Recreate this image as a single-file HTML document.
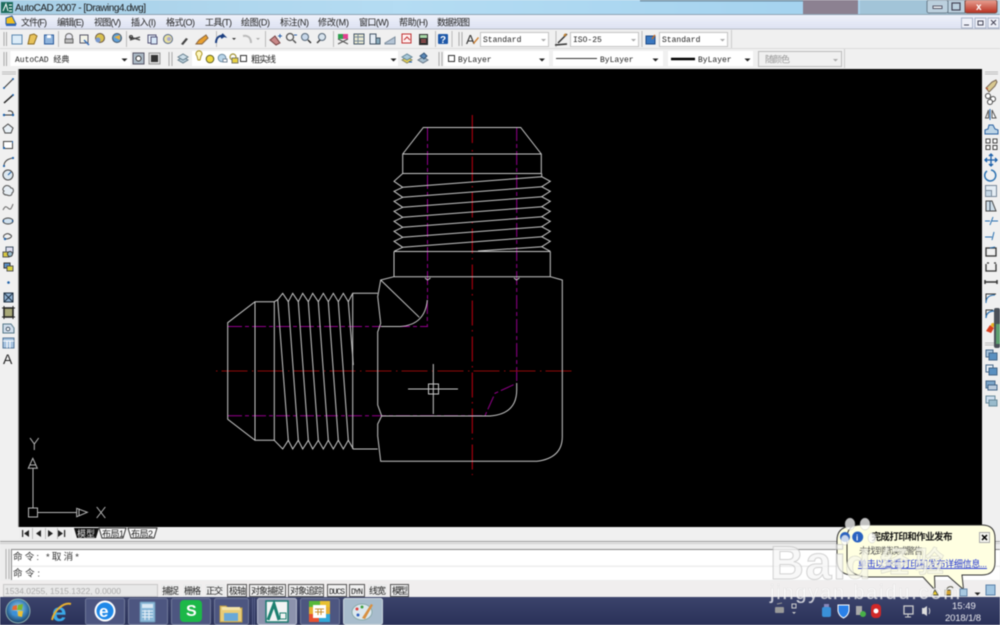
<!DOCTYPE html>
<html><head><meta charset="utf-8"><title>AutoCAD 2007</title>
<style>
html,body{margin:0;padding:0;width:1000px;height:625px;overflow:hidden;background:#f0f0f0}
svg{position:absolute;left:0;top:0;filter:blur(.4px)}
text{font-family:"Liberation Sans","Noto Sans CJK SC",sans-serif;fill:#222}
.m{font-family:"Liberation Mono","Noto Sans CJK SC",monospace;font-size:8px}
.cb{fill:#fff;stroke:#c4c4c4}
.g{fill:none;stroke:#333;stroke-width:1}
.b{fill:none;stroke:#1b5fa8;stroke-width:1.4}
.d{fill:#3c3c3c}
.st{font-size:9px;fill:#222}
.sb{fill:#f0f0f0;stroke:#555;stroke-width:1}
.fl{fill:#ececec}
.tb{fill:#4d5680;stroke:#6f7898}
</style></head><body>
<svg width="1000" height="625" viewBox="0 0 1000 625" xmlns="http://www.w3.org/2000/svg">
<defs>
<linearGradient id="tt" x1="0" x2="1" y1="0" y2="0"><stop offset="0" stop-color="#a8cfe6"/><stop offset=".4" stop-color="#b4dcf3"/><stop offset=".8" stop-color="#a5d3ef"/><stop offset="1" stop-color="#b7d5e6"/></linearGradient>
<linearGradient id="mn" x1="0" x2="0" y1="0" y2="1"><stop offset="0" stop-color="#eef1fa"/><stop offset="1" stop-color="#dde2f2"/></linearGradient>
<linearGradient id="tk" x1="0" x2="0" y1="0" y2="1"><stop offset="0" stop-color="#3b436b"/><stop offset="1" stop-color="#2a3158"/></linearGradient>
<linearGradient id="cl" x1="0" x2="0" y1="0" y2="1"><stop offset="0" stop-color="#e9a294"/><stop offset="1" stop-color="#b83020"/></linearGradient>
<radialGradient id="orb" cx=".5" cy=".4" r=".6"><stop offset="0" stop-color="#a8d8ef"/><stop offset=".6" stop-color="#3a80b8"/><stop offset="1" stop-color="#1c3d60"/></radialGradient>
</defs>

<!-- title bar -->
<rect width="1000" height="15" fill="url(#tt)"/>
<rect x="640" y="0" width="200" height="1.5" fill="#6f8ea3"/>
<rect x="803" y="0" width="55" height="14" fill="#8c8191"/>
<rect x="860" y="0" width="70" height="14" fill="#a2c4d8"/>
<rect y="14" width="1000" height="1" fill="#8fa5b5"/>
<rect x="1" y="2" width="12" height="11" fill="#1d6b5c"/><path d="M3 11 L6 4 L8 11 M9 5h3M9 8h3M9 11h3" fill="none" stroke="#fff" stroke-width="1"/>
<text x="15" y="11" font-size="10" textLength="131" style="fill:#1a1a1a">AutoCAD 2007 - [Drawing4.dwg]</text>
<rect x="927" y="0" width="21" height="13" rx="2" fill="#bcd0de" stroke="#6a7d8c"/>
<rect x="933" y="6" width="9" height="2.5" fill="#f4f8fb" stroke="#556"/>
<rect x="948" y="0" width="17" height="13" fill="#bcd0de" stroke="#6a7d8c"/>
<rect x="952" y="3" width="8" height="7" fill="none" stroke="#445" stroke-width="1.2"/>
<rect x="965" y="0" width="32" height="13" rx="2" fill="url(#cl)" stroke="#7a4a44"/>
<text x="976" y="10" font-size="10" font-weight="bold" style="fill:#fff">x</text>

<!-- menu -->
<rect y="15" width="1000" height="14" fill="url(#mn)"/>
<path d="M6 24 L6 18 L12 16 L16 24Z" fill="#f0c020" stroke="#2a5ca8"/><rect x="6" y="24" width="10" height="2" fill="#3468b8"/>
<g font-size="9">
<text x="21" y="25.500" textLength="26">文件(F)</text>
<text x="57" y="25.500" textLength="27">编辑(E)</text>
<text x="94" y="25.500" textLength="27">视图(V)</text>
<text x="131" y="25.500" textLength="25">插入(I)</text>
<text x="166" y="25.500" textLength="29">格式(O)</text>
<text x="205" y="25.500" textLength="27">工具(T)</text>
<text x="241" y="25.500" textLength="29">绘图(D)</text>
<text x="280" y="25.500" textLength="29">标注(N)</text>
<text x="318" y="25.500" textLength="31">修改(M)</text>
<text x="359" y="25.500" textLength="30">窗口(W)</text>
<text x="399" y="25.500" textLength="29">帮助(H)</text>
<text x="437" y="25.500" textLength="33">数据视图</text>
</g>
<g fill="#eef0f8" stroke="#aab4c8"><rect x="961.500" y="18" width="11" height="10"/><rect x="975" y="18" width="11" height="10"/><rect x="988" y="18" width="11" height="10"/></g>
<path d="M964 25h5" stroke="#445"/><rect x="978" y="21" width="5" height="4" fill="none" stroke="#445"/><path d="M991 20l5 5m0-5l-5 5" stroke="#445"/>

<!-- toolbars bg -->
<rect y="29" width="1000" height="40" fill="#f0f0f0"/>
<path d="M0 29h1000" stroke="#b8bcc8"/><path d="M0 48.500h1000" stroke="#dcdcdc"/>
<path d="M4 32v14M6.500 32v14M4 52v14M6.500 52v14M169 52v14M172 52v14M442 52v14M439 52v14M459 32v14M462 32v14" stroke="#a8a8a8"/>
<path d="M731.500 30v18M844.500 49v19" stroke="#ccc"/>

<!-- toolbar 1 icons -->
<rect x="12" y="35" width="10" height="9" fill="#dcecf8" stroke="#5a86b0"/>
<path d="M28 44l2-9 4-1 3 2-3 8z" fill="#e7c25a" stroke="#8a6a20"/>
<rect x="44.500" y="35" width="9" height="9" fill="#8fb4dc" stroke="#2a5a9a"/><rect x="47" y="35" width="4" height="3" fill="#fff"/>
<path d="M58.500 31v16" stroke="#bbb"/>
<circle cx="69" cy="37" r="3.500" fill="#e8e8f0" stroke="#666"/><rect x="65" y="39" width="8" height="4" fill="#bbb" stroke="#666"/>
<rect x="80" y="35" width="8" height="8" fill="#f4f4e8" stroke="#556"/><path d="M84 40l5 5" stroke="#3a70b8" stroke-width="1.500"/>
<circle cx="100" cy="38" r="4.500" fill="#d8c050" stroke="#654"/><circle cx="98" cy="40" r="2.500" fill="#7a9ad0"/>
<circle cx="117" cy="38" r="4.500" fill="#60a0d8" stroke="#456"/><path d="M114 37l6-2 0 5z" fill="#e8b040"/>
<path d="M126.500 31v16M216.500 31v16M265.500 31v16M333.500 31v16M435.500 31v16M452 31v16M556 31v16M642 31v16" stroke="#bbb"/>
<path d="M130 40l10-3M130 37l10 3" stroke="#444" stroke-width="1.200"/><circle cx="131" cy="37" r="1.500" fill="none" stroke="#333"/>
<rect x="148" y="35" width="8" height="8" fill="#e8f0f8" stroke="#557"/><rect x="151" y="37" width="6" height="7" fill="#d8e8f8" stroke="#557"/>
<circle cx="168" cy="39" r="4.500" fill="#e8e0a0" stroke="#568"/><circle cx="169" cy="39" r="2" fill="#aac"/>
<path d="M181 44l5-6 2 1-5 6z" fill="#444"/>
<path d="M196 44l3-4 7-5 2 3-6 6z" fill="#e8a030" stroke="#864"/>
<path d="M216 43c0-6 4-8 8-7l-2-2m2 2l-3 2" fill="none" stroke="#1c3f80" stroke-width="2"/>
<path d="M232 38h4l-2 2z" fill="#333"/>
<path d="M251 43c0-6-4-8-8-7" fill="none" stroke="#bbb" stroke-width="2"/>
<path d="M256 38h4l-2 2z" fill="#aaa"/>
<path d="M270 40l5-4 5 7-4 2z" fill="#c88888" stroke="#744"/><path d="M278 36h4M280 34v4" stroke="#2a5fa8"/>
<circle cx="290" cy="37" r="3.500" fill="none" stroke="#555" stroke-width="1.300"/><path d="M293 40l3 3" stroke="#555" stroke-width="1.500"/><path d="M294 35h3" stroke="#2a5fa8"/>
<circle cx="305" cy="37" r="3.500" fill="#c8d8ea" stroke="#567"/><path d="M308 40l3 3" stroke="#333" stroke-width="1.500"/>
<circle cx="322" cy="37" r="3.500" fill="#d8e4ee" stroke="#567"/><path d="M320 40l-3 3" stroke="#444" stroke-width="1.500"/>
<rect x="338" y="34" width="10" height="5" fill="#e04090"/><rect x="338" y="34" width="5" height="5" fill="#30a050"/><path d="M338 39l10 5M348 39l-10 5" stroke="#555"/>
<rect x="354" y="34" width="10" height="10" fill="#e8e8d0" stroke="#456"/><path d="M354 37h10M354 41h10M358 34v10" stroke="#789"/>
<path d="M370 34h6v10h-6z" fill="#e4ecf4" stroke="#456"/><path d="M376 38h4v6h-4z" fill="#8ab" stroke="#456"/>
<path d="M385 43l10-6v7h-10z" fill="#b4c4d4" stroke="#789"/>
<rect x="402" y="34" width="9" height="9" fill="#fff0f0" stroke="#c03030"/><path d="M404 40l3-3 3 3" stroke="#c03030" fill="none"/>
<rect x="419" y="34" width="9" height="11" fill="#2e2e2e"/><rect x="420" y="35" width="7" height="3" fill="#a8d8a8"/><path d="M421 40h5M421 42h5" stroke="#d06060"/>
<rect x="438" y="34" width="10" height="10" rx="1" fill="#1e58a8"/><text x="440" y="43" font-size="10" font-weight="bold" style="fill:#fff">?</text>
<text x="466" y="44" font-size="13" style="fill:#333">A</text><path d="M473 43l5-6 1 1-5 6z" fill="#d08030"/>

<rect x="480.500" y="32.500" width="68" height="14" class="cb"/><text x="483" y="42" class="m">Standard</text><path d="M541 39h5l-2.500 2.500z" fill="#aaa"/>
<path d="M555 45l12-1M558 43l9-9" stroke="#333" stroke-width="1.500"/><path d="M564 36l2-2" stroke="#c08030" stroke-width="2"/>
<rect x="570.500" y="32.500" width="68" height="14" class="cb"/><text x="573" y="42" class="m">ISO-25</text><path d="M631 39h5l-2.500 2.500z" fill="#aaa"/>
<rect x="646" y="36" width="9" height="8" fill="#3a78c0" stroke="#1d4a88"/><path d="M652 39l3-4" stroke="#c07030" stroke-width="1.500"/>
<rect x="659.500" y="32.500" width="68" height="14" class="cb"/><text x="662" y="42" class="m">Standard</text><path d="M720 39h5l-2.500 2.500z" fill="#aaa"/>

<!-- toolbar 2 -->
<rect x="10.500" y="51" width="120" height="15" fill="#fff"/><text x="15" y="62" class="m">AutoCAD 经典</text><path d="M121.500 58.500h6l-3 3z" fill="#222"/>
<rect x="133" y="53" width="11" height="11" fill="#aab8c4" stroke="#556"/><circle cx="138.500" cy="58.500" r="2.500" fill="#fff" stroke="#333"/>
<rect x="149" y="53" width="11" height="11" fill="#ddd" stroke="#999"/><rect x="151" y="55" width="7" height="7" fill="#333"/>
<path d="M178 60l5-3 5 3-5 3z" fill="#b8ccd8" stroke="#68808f"/><path d="M178 57l5-3 5 3-5 3z" fill="#cfe0ea" stroke="#68808f"/>
<rect x="192" y="51" width="206" height="15" fill="#fff"/>
<path d="M197 56a3 3 0 1 1 4 0l-1 4h-2z" fill="#fff8c0" stroke="#a89020"/>
<circle cx="210" cy="59" r="3.800" fill="#f0d840" stroke="#5a5a20"/>
<circle cx="222" cy="58" r="3.800" fill="#b8d4e8" stroke="#6888a0"/><rect x="223" y="59" width="4" height="3" fill="#fff" stroke="#789"/>
<circle cx="233" cy="57" r="3" fill="none" stroke="#a09030" stroke-width="1.200"/><rect x="232" y="58" width="6" height="5" fill="#e8d040" stroke="#776"/>
<rect x="240.500" y="55.500" width="6" height="6" fill="#fff" stroke="#333"/>
<text x="251" y="62.500" font-size="9" textLength="25">粗实线</text>
<path d="M390.500 58.500h6l-3 3z" fill="#222"/>
<path d="M402 60l5-3 5 3-5 3z" fill="#e8d050" stroke="#886"/><path d="M402 57l5-3 5 3-5 3z" fill="#a8c8d8" stroke="#689"/><path d="M409 62h3" stroke="#1c5ca8"/>
<path d="M418 60l5-3 5 3-5 3z" fill="#a8c0d0" stroke="#678"/><path d="M420 56l4-3 3 3-3 3z" fill="#5a88b8" stroke="#357"/>

<rect x="444" y="51" width="105" height="15" fill="#fff"/><rect x="448.500" y="55.500" width="6" height="6" fill="#fff" stroke="#333"/><text x="458" y="62" class="m">ByLayer</text><path d="M539 58.500h6l-3 3z" fill="#222"/>
<rect x="553" y="51" width="110" height="15" fill="#fff"/><path d="M556 58.500h41" stroke="#333"/><text x="600" y="62" class="m">ByLayer</text><path d="M652.500 58.500h6l-3 3z" fill="#222"/>
<rect x="668" y="51" width="85" height="15" fill="#fff"/><path d="M671 59h24" stroke="#000" stroke-width="2.500"/><text x="698" y="62" class="m">ByLayer</text><path d="M744.500 58.500h6l-3 3z" fill="#222"/>
<rect x="758.500" y="51.500" width="83" height="15" fill="#f0f0f0" stroke="#bbb"/><text x="765" y="62.500" font-size="9" style="fill:#999" textLength="25">随颜色</text><path d="M833 59h5l-2.500 2.500z" fill="#aaa"/>

<!-- side strips -->
<rect x="0" y="69" width="19" height="459" fill="#f0f0f0"/><rect x="982" y="69" width="18" height="459" fill="#f0f0f0"/>
<path d="M2 72h14M2 74h14M985 72h13M985 74h13M985 343h13M985 345h13" stroke="#bbb"/>
<rect x="18" y="69" width="1" height="459" fill="#888"/>
<!-- canvas -->
<rect x="19" y="69" width="963" height="458" fill="#000"/>

<!-- left icons -->
<g>
<path d="M4 88l9-9" stroke="#333"/><circle cx="4" cy="88" r="1" fill="#1b5fa8"/><circle cx="13" cy="79" r="1" fill="#1b5fa8"/>
<path d="M4 103l9-8" stroke="#222" stroke-width="1.500"/><circle cx="13" cy="95" r="1" fill="#1b5fa8"/>
<path d="M4 115h8c2-2 0-5-4-4" fill="none" stroke="#333"/><circle cx="4" cy="115" r="1.200" fill="#1b5fa8"/><circle cx="13" cy="115" r="1.200" fill="#1b5fa8"/>
<path d="M8 124l5 4-2 5H5l-2-5z" fill="#e8f0f6" stroke="#444"/>
<rect x="3.500" y="141.500" width="9" height="7" fill="#fff" stroke="#444"/><path d="M3 148l2 0M12 142l1 0" stroke="#1b5fa8" stroke-width="2"/>
<path d="M4 166c0-4 3-7 9-8" fill="none" stroke="#444"/><circle cx="4" cy="166" r="1.100" fill="#1b5fa8"/><circle cx="13" cy="158" r="1.100" fill="#1b5fa8"/>
<circle cx="8" cy="175" r="5" fill="#dde8f0" stroke="#444"/><path d="M8 175l3-3" stroke="#1b5fa8"/>
<path d="M4 187c2-3 6-1 7 1 3 0 3 4 1 5 0 3-3 3-5 2-3 0-5-2-3-4-2-1-1-3 0-4z" fill="#e6edf3" stroke="#555"/>
<path d="M3 210c2-4 3-4 5-2s3 2 5-4" fill="none" stroke="#666"/>
<ellipse cx="8" cy="221" rx="5" ry="3" fill="#cfe0ee" stroke="#444"/><path d="M3 221h1M12 221h1" stroke="#1b5fa8" stroke-width="2"/>
<path d="M4 238c-2-3 3-5 5-4s4 2 1 4c-2 1-3 1-4 1" fill="none" stroke="#444"/><circle cx="5" cy="239" r="1.200" fill="#1b5fa8"/>
<rect x="6" y="247" width="7" height="6" fill="#dde" stroke="#456"/><rect x="3" y="252" width="6" height="5" fill="#d8c840" stroke="#555"/><circle cx="10" cy="254" r="2.500" fill="#9bc" stroke="#333"/>
<rect x="4" y="263" width="6" height="5" fill="#5a90c8" stroke="#333"/><rect x="7" y="266" width="6" height="5" fill="#d8d040" stroke="#555"/>
<circle cx="8.500" cy="282.500" r="1.300" fill="#1b5fa8"/>
<rect x="4" y="293" width="9" height="9" fill="#8fb0d0" stroke="#234"/><path d="M4 293l9 9M13 293l-9 9" stroke="#234"/>
<rect x="4" y="308" width="9" height="9" fill="#a8a878" stroke="#111" stroke-width="1.500"/><path d="M2 308h13M2 317h13M4 306v13M13 306v13" stroke="#222"/>
<path d="M3 324h8l3 4v5H3z" fill="#cfdcea" stroke="#578"/><circle cx="8" cy="329" r="1.800" fill="#fff" stroke="#456"/>
<rect x="3" y="338" width="11" height="10" fill="#a8c4e0" stroke="#579"/><path d="M3 341h11M7 341v7M10 341v7" stroke="#fff"/>
<text x="3" y="364" font-size="14" style="fill:#222">A</text>
</g>

<!-- right icons -->
<g>
<path d="M986 88l6-6 4-2 1 2-2 4-6 6z" fill="#d8c890" stroke="#765"/><path d="M986 88l2 1" stroke="#c05030"/>
<circle cx="988" cy="96" r="2.500" fill="#fff" stroke="#444"/><circle cx="993" cy="99" r="2.500" fill="#fff" stroke="#444"/><circle cx="990" cy="102" r="2.500" fill="#fff" stroke="#444"/>
<path d="M990 109v11" stroke="#1b5fa8"/><path d="M988.500 110l-3 8h3zM992 110l4 8h-4z" fill="#fff" stroke="#555"/>
<path d="M985 134h13v-4l-3-1-2-4h-4l-1 4-3 1z" fill="#bcd4e6" stroke="#2a60a0"/>
<g fill="#fff" stroke="#444"><rect x="986" y="139" width="4" height="4"/><rect x="993" y="139" width="4" height="4"/><rect x="986" y="145.500" width="4" height="4"/><rect x="993" y="145.500" width="4" height="4"/></g>
<path d="M991 154v12M985 160h12M989 156l2-2 2 2M989 164l2 2 2-2M987 158l-2 2 2 2M995 158l2 2-2 2" fill="none" stroke="#1b5fa8" stroke-width="1.300"/>
<path d="M987 171a5.500 5.500 0 1 0 4-1" fill="none" stroke="#2a70b0" stroke-width="1.500"/>
<rect x="985.500" y="185.500" width="11" height="11" fill="#e4edf4" stroke="#789"/><rect x="985.500" y="190.500" width="6" height="6" fill="#c6d8e6" stroke="#789"/>
<path d="M986 211v-10h6l4 10z" fill="#d0dfea" stroke="#444"/><path d="M990 201v10" stroke="#456"/>
<path d="M985 221h5M992 221h6M993 217l-3 8" stroke="#2a70b0"/>
<path d="M985 237h7M994 232l-2 8" stroke="#2a70b0"/>
<rect x="986" y="248" width="10" height="8" fill="none" stroke="#333" stroke-width="1.300"/><path d="M990 248l5-1" stroke="#2a70b0"/>
<path d="M986 264v7h10v-7M987 263h2M994 263h2" fill="none" stroke="#333" stroke-width="1.300"/>
<path d="M985 282h12M985 280v4M997 280v4" stroke="#333" stroke-width="1.500"/>
<path d="M986 303v-9h10" fill="none" stroke="#333"/><path d="M986 303c0-5 3-8 9-8" fill="none" stroke="#2a70b0"/>
<path d="M986 318v-8h7" fill="none" stroke="#333"/><path d="M986 318c0-4 3-7 8-7" fill="none" stroke="#2a70b0" stroke-width="1.300"/>
<path d="M986 331l4-6 4 3-3 5z" fill="#d84020"/><circle cx="993" cy="325" r="2" fill="#e8b020"/>
<g stroke="#468" fill="#a8c4dc"><rect x="986" y="350" width="7" height="7"/><rect x="989" y="353" width="8" height="7" fill="#5a90c0"/></g>
<g stroke="#468" fill="#e8f0f6"><rect x="986" y="365" width="7" height="7"/><rect x="989" y="368" width="8" height="7" fill="#5a90c0"/></g>
<g stroke="#468" fill="#7aa4c8"><rect x="986" y="381" width="9" height="7"/><rect x="988" y="385" width="9" height="5" fill="#bcd"/></g>
<g stroke="#689" fill="#cde"><rect x="986" y="396" width="9" height="7"/><rect x="989" y="400" width="8" height="6" fill="#9bc"/></g>
<rect x="994" y="308" width="6" height="40" rx="2" fill="#4a5058"/><rect x="996" y="324" width="4" height="20" fill="#5fa070"/>
</g>

<!-- drawing -->
<g fill="none" stroke-width="1">
<g stroke="#94008c" stroke-dasharray="14 3 4 3">
<path d="M427.500 127v172"/><path d="M516.700 127v256"/>
<path d="M228 326.500h200"/><path d="M427.300 300v26.500"/>
<path d="M228 415.700h257L495 393.300 516.700 383.300"/>
</g>
<path d="M472.300 115V143" stroke="#c00010"/>
<path d="M472.300 150V475" stroke="#c00010" stroke-dasharray="1.500 5 25 4.500"/>
<path d="M216 371H574" stroke="#8f0a0a" stroke-dasharray="1.500 4 26 4.500"/>
<g stroke="#c8c8c8">
<path d="M423.300 127.500H520.700L541.300 154V173.500H402.700V154Z"/><path d="M402.700 154H541.300"/>
<path d="M402.700 173.500L394 181.300 402.700 187.300 394 191.300 402.700 197.300 394 201.300 402.700 207.300 394 211.300 402.700 217.300 394 221.300 402.700 227.300 394 231.300 402.700 237.300 394 241.300 402.700 247.300 394 251.300"/>
<path d="M541.700 173.500V176.700L550.300 181.300 541.700 186.700 550.300 191.300 541.700 196.700 550.300 201.300 541.700 206.700 550.300 211.300 541.700 216.700 550.300 221.300 541.700 226.700 550.300 231.300 541.700 236.700 550.300 241.300 541.700 246.700 550.300 251.300"/>
<path d="M402.700 187.300L541.700 176.700M402.700 197.300L541.700 186.700M402.700 207.300L541.700 196.700M402.700 217.300L541.700 206.700M402.700 227.300L541.700 216.700M402.700 237.300L541.700 226.700M402.700 247.300L541.700 236.700M478 251L541.700 246.700"/>
<path d="M394 251.500H550.300M394 251.500V276.700M550.300 251.500V276.700M394 276.700H550.300"/>
<path d="M394 276.700L380.700 280 377.700 296.700 380.700 323.300 377.700 332 377.700 405 381.700 416 377.700 424 377.700 436 380.700 461.300H536.700Q562.300 458 562.300 436.700V280L550.300 276.700"/>
<path d="M425 278l2.500 2 3-2M514 278l2.500 2 3-2"/>
<path d="M380.700 280L419.300 317.300"/>
<path d="M427.300 300Q425 325 400 326.500H381"/>
<path d="M381.700 416H490Q516.700 414 516.700 390V383"/>
<path d="M227.700 322.700L255 301.700H274.300V440.300H255L227.700 419.300Z"/><path d="M255 301.700V440.300"/>
<path d="M274.300 301.700L277.700 299.700 282.700 293.300 288.300 301.700 292.700 293.300 298.300 301.700 302.700 293.300 308.300 301.700 312.700 293.300 318.300 301.700 323.300 293.300 328.300 301.700 333.300 293.300 338.300 301.700 343.300 293.300 348.300 301.700 352.700 293.300H377.700"/>
<path d="M274.300 440.300L282.700 449 288.300 440.300 292.700 449 298.300 440.300 302.700 449 308.300 440.300 312.700 449 318.300 440.300 323.300 449 328.300 440.300 333.300 449 338.300 440.300 343.300 449 348.300 440.300 353.300 449H377.700"/>
<path d="M277.700 299.700L288.300 440.300M288.300 301.700L298.300 440.300M298.300 301.700L308.300 440.300M308.300 301.700L318.300 440.300M318.300 301.700L328.300 440.300M328.300 301.700L338.300 440.300M338.300 301.700L348.300 440.300M348.300 301.700L353.300 365"/>
<path d="M352.700 293.300V449"/>
<path d="M408 389H458M433.300 364V414"/><rect x="428.500" y="384" width="10" height="10"/>
</g>
<g stroke="#b8b8b8">
<rect x="28.500" y="508" width="9" height="9"/>
<path d="M33 508V468M37.500 512.500H76.700"/>
<path d="M32.800 458.300L28.300 468.300H37.300ZM76.700 508.300L87.300 512.300 76.700 516.700Z"/><path d="M29.800 465H36M79 508.500V516"/>
<path d="M30 438L34.300 444 38.700 438M34.300 444V450M96.700 507L105.300 518M105.300 507L96.700 518"/>
</g>
</g>

<!-- tabs -->
<rect x="0" y="527" width="1000" height="12" fill="#f0f0f0"/>
<rect x="19" y="528" width="53" height="11" fill="#eee"/>
<g fill="#222"><path d="M22 530h1.200v7H22zM29 530v7l-5-3.500zM41 530v7l-5-3.500zM48 530v7l5-3.500zM58 530v7l5-3.500zM64 530h1.200v7H64z"/></g>
<path d="M32.500 528v11M45.500 528v11M57.500 528v11" stroke="#bbb"/>
<path d="M74 528h25l-3 10H77z" fill="#111"/><text x="77" y="537" font-size="9" style="fill:#ddd">模型</text>
<path d="M99 528h27l-3 10h-21z" fill="#fafafa" stroke="#333"/><text x="102" y="537" font-size="9" textLength="22">布局1</text>
<path d="M128 528h29l-3 10h-23z" fill="#fafafa" stroke="#333"/><text x="131" y="537" font-size="9" textLength="22">布局2</text>
<rect x="0" y="539" width="1000" height="4" fill="#eee"/>
<path d="M0 541.500h1000" stroke="#9a9a9a"/><path d="M0 543.500h1000" stroke="#ccc"/>

<!-- command -->
<rect x="0" y="544" width="1000" height="37" fill="#ededed"/>
<path d="M6 549v30M9 549v30" stroke="#b0b0b0"/>
<rect x="12" y="550" width="988" height="15.500" fill="#fff"/>
<rect x="12" y="567" width="988" height="13" fill="#fff"/>
<path d="M11.500 549v31" stroke="#888"/><path d="M12 549.500h988" stroke="#888"/>
<text x="13" y="560" font-size="9.500" style="fill:#333" textLength="66">命令: *取消*</text>
<text x="13" y="576.500" font-size="9.500" style="fill:#333" textLength="27">命令:</text>

<!-- status -->
<rect x="0" y="581" width="1000" height="16" fill="#f0eeee"/>
<rect x="3.500" y="584.500" width="154" height="12" fill="#e8e8e8" stroke="#c8c8c8"/>
<text x="5" y="594" font-size="8.500" style="fill:#aaa" textLength="116">1534.0255, 1515.1322, 0.0000</text>
<rect x="161" y="584" width="18" height="13" class="fl"/><text x="162" y="594" class="st" textLength="17">捕捉</text>
<rect x="183" y="584" width="19" height="13" class="fl"/><text x="184" y="594" class="st" textLength="17">栅格</text>
<rect x="205" y="584" width="20" height="13" class="fl"/><text x="206" y="594" class="st" textLength="17">正交</text>
<rect x="227.500" y="584.500" width="19" height="12" class="sb"/><text x="229" y="594" class="st" textLength="17">极轴</text>
<rect x="249.500" y="584.500" width="36" height="12" class="sb"/><text x="251" y="594" class="st" textLength="33">对象捕捉</text>
<rect x="288.500" y="584.500" width="35" height="12" class="sb"/><text x="290" y="594" class="st" textLength="33">对象追踪</text>
<rect x="327.500" y="584.500" width="19" height="12" class="sb"/><text x="329" y="594" class="m" textLength="16">DUCS</text>
<rect x="349.500" y="584.500" width="15" height="12" class="sb"/><text x="351" y="594" class="m" textLength="12">DYN</text>
<rect x="368" y="584" width="19" height="13" class="fl"/><text x="369" y="594" class="st" textLength="17">线宽</text>
<rect x="390.500" y="584.500" width="18" height="12" class="sb"/><text x="392" y="594" class="st" textLength="16">模型</text>

<!-- balloon -->
<path d="M846 527Q837 530 837 540V560Q837 573 850 575H880V527Z" fill="#ffffe1" stroke="#333"/>
<path d="M860 525H982Q995 525 995 538V562Q995 575 982 575H962L963.500 589.500 948 576H934.500L935 590 923 577H866Q847 575 847 560V538Q847 525 860 525Z" fill="#ffffe1" stroke="#333"/>
<circle cx="845" cy="537" r="5" fill="#2a62c0"/>
<circle cx="857.700" cy="537" r="5.500" fill="#2a62c0"/><text x="856" y="540.500" font-size="8" font-weight="bold" style="fill:#fff">i</text>
<text x="871.500" y="540" font-size="9.500" font-weight="bold" style="fill:#111" textLength="81">完成打印和作业发布</text>
<rect x="979.500" y="532.500" width="10" height="10" fill="#f6f6f0" stroke="#aaa"/><path d="M982 535l5 5m0-5l-5 5" stroke="#000" stroke-width="1.500"/>
<text x="859" y="554" font-size="9" style="fill:#555" textLength="64">未找到错误或警告</text>
<text x="858" y="567" font-size="9" style="fill:#1a2fd0;text-decoration:underline" textLength="129">单击以查看打印和发布详细信息...</text>

<!-- status tray -->
<path d="M932 595l3-5 3 5z" fill="#f0d030" stroke="#554"/>
<path d="M945 595v-5h6v5z" fill="#d0a030" stroke="#443"/><path d="M947 590c0-4 5-4 6-2" fill="none" stroke="#554"/>
<rect x="960" y="589" width="7" height="7" fill="#a8c8e0" stroke="#68a"/>
<path d="M974.500 592.500h6l-3 3z" fill="#222"/>
<rect x="986" y="585" width="9" height="10" fill="#a0c4e0" stroke="#5880a8"/>

<!-- taskbar -->
<rect y="597" width="1000" height="28" fill="url(#tk)"/>
<circle cx="18" cy="611" r="12" fill="url(#orb)" stroke="#8aa"/>
<path d="M13 606l4-1v5l-5 0z" fill="#e86a30"/><path d="M18 605l5-1-1 6h-5z" fill="#7ab830"/><path d="M12 611h5v5l-5-1z" fill="#3c90d8"/><path d="M18 611h5l-1 6-4-1z" fill="#f0c030"/>
<text x="52" y="621" font-size="26" font-weight="bold" style="fill:#3aa8e8">e</text>
<path d="M52 620c2-10 12-18 19-16" fill="none" stroke="#e8b030" stroke-width="2"/>
<rect class="tb" x="85.500" y="598.500" width="39" height="26" rx="2"/>
<circle cx="105" cy="611" r="10.500" fill="#fff"/><circle cx="105" cy="611" r="8.500" fill="#1e88e8"/><text x="99" y="617" font-size="17" font-weight="bold" style="fill:#fff">e</text>
<rect class="tb" x="128.500" y="598.500" width="39" height="26" rx="2"/>
<rect x="140" y="602" width="15" height="20" rx="1" fill="#8ab8d8" stroke="#6890b0"/><rect x="142" y="604" width="11" height="4" fill="#d8e8f4"/><path d="M142 611h11M142 614h11M142 617h11M145 610v10M149 610v10" stroke="#e4eef6"/>
<rect class="tb" x="171.500" y="598.500" width="39" height="26" rx="2"/>
<rect x="180" y="600" width="22" height="22" rx="4" fill="#1cb848"/><text x="186" y="616" font-size="16" font-weight="bold" style="fill:#fff">S</text>
<rect class="tb" x="214.500" y="598.500" width="34" height="26" rx="2"/>
<path d="M220 606h6l2 2h14v14h-22z" fill="#e8cc78" stroke="#b89a48"/><rect x="224" y="613" width="14" height="8" fill="#68a8d8"/><path d="M222 607h18v3h-18z" fill="#f4e4a8"/>
<path d="M252.500 598v27M254.500 598v27" stroke="#555e88"/>
<rect x="257.500" y="598.500" width="39" height="26" rx="2" fill="#8c92ac" stroke="#b4bacc"/>
<rect x="266" y="601" width="22" height="21" fill="#f2f4f4" stroke="#1d7a70" stroke-width="1.500"/><path d="M268 620l6-16 5 16" fill="none" stroke="#1d8070" stroke-width="3"/><rect x="280" y="613" width="6" height="6" fill="none" stroke="#1d8070"/>
<rect class="tb" x="300.500" y="598.500" width="39" height="26" rx="2"/>
<rect x="309" y="601" width="21" height="21" rx="2" fill="#e8b030"/><rect x="309" y="601" width="11" height="6" fill="#58b838"/><rect x="320" y="601" width="10" height="6" fill="#e8c030"/><rect x="309" y="614" width="10" height="8" fill="#e85030"/><rect x="319" y="614" width="11" height="8" fill="#30a8d8"/><rect x="313" y="605" width="13" height="13" fill="#fff"/><path d="M315 609h9M315 612h9M318 609v6M321 609v6" stroke="#c89030"/>
<rect x="343.500" y="598.500" width="39" height="26" rx="2" fill="#a8bccc" stroke="#c8d4dc"/>
<ellipse cx="362" cy="612" rx="10" ry="8" fill="#dce8ee" stroke="#8aa"/><circle cx="357" cy="609" r="1.500" fill="#e04040"/><circle cx="362" cy="607" r="1.500" fill="#40a040"/><circle cx="358" cy="615" r="1.500" fill="#3060c0"/><path d="M362 618l9-14 2 1-8 14z" fill="#d89040"/>

<!-- tray -->
<rect x="775" y="607" width="9" height="6" rx="1" fill="#999"/><path d="M777 604l5-1" stroke="#999"/>
<rect x="792" y="604" width="4" height="4" fill="none" stroke="#ccc"/><path d="M792 612h4l-2 2z" fill="#ccc"/>
<rect x="822" y="607" width="9" height="10" rx="2" fill="#3a90d8"/><rect x="824" y="604" width="5" height="3" fill="#88b"/>
<path d="M838 605h11v6q-1 5-5.500 7-4.500-2-5.500-7z" fill="#2a80e8" stroke="#fff"/>
<rect x="856" y="606" width="6" height="9" fill="#aaa"/><circle cx="863" cy="614" r="3" fill="#48b048"/>
<rect x="871" y="604" width="10" height="14" rx="4" fill="#d02828"/><circle cx="876" cy="611" r="2.500" fill="#fff"/>
<rect x="904" y="606" width="9" height="8" fill="none" stroke="#ccc" stroke-width="1.300"/><path d="M908 614v3M905 617h6" stroke="#ccc"/>
<path d="M922 608h2l3-2v10l-3-2h-2z" fill="#ddd"/><path d="M929 608c1 2 1 4 0 6" fill="none" stroke="#ccc"/>
<text x="952" y="609" font-size="9.500" style="fill:#e8e8ee">15:49</text>
<text x="945" y="621" font-size="9.500" style="fill:#e8e8ee" textLength="36">2018/1/8</text>

<!-- watermark -->
<g style="opacity:.75">
<text x="770" y="579" font-size="47" font-weight="bold" style="fill:#f6f6f6;stroke:#c4c4c4;stroke-width:1" textLength="76">Bai</text>
<g fill="#fff" stroke="#bbb" stroke-width=".5"><ellipse cx="850" cy="524" rx="5" ry="6"/><ellipse cx="865" cy="524" rx="5" ry="6"/><ellipse cx="845" cy="540" rx="4" ry="5"/><ellipse cx="872" cy="538" rx="4" ry="5"/></g>
<text x="845" y="579" font-size="42" font-weight="bold" style="fill:#f8f8ea;stroke:#c8c8c0;stroke-width:.6">d</text>
<text x="880" y="572" font-size="29" font-weight="bold" style="fill:#f8f8ea;stroke:#c8c8c0;stroke-width:.6" textLength="64">经验</text>
<text x="770" y="599" font-size="20" style="fill:#fff;stroke:#cfcfcf;stroke-width:.3" textLength="190">jingyan.baidu.com</text>
</g>
</svg>
</body></html>
